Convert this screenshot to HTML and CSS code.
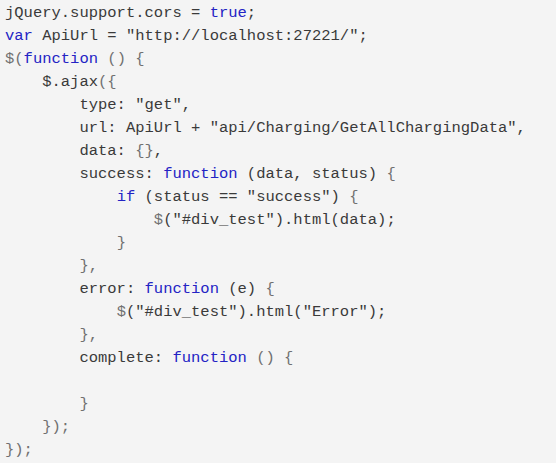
FILE: index.html
```html
<!DOCTYPE html>
<html>
<head>
<meta charset="utf-8">
<link rel="stylesheet" href="styles.css">
</head>
<body>
<pre class="code">jQuery.support.cors = <span class="k">true</span>;
<span class="k">var</span> ApiUrl = "http://localhost:27221/";
<span class="p">$(</span><span class="k">function</span> <span class="p">() {</span>
    $.ajax<span class="p">({</span>
        type: "get",
        url: ApiUrl + "api/Charging/GetAllChargingData",
        data: <span class="p">{}</span>,
        success: <span class="k">function</span> (data, status) <span class="p">{</span>
            <span class="k">if</span> (status == "success") <span class="p">{</span>
                <span class="p">$</span>("#div_test").html(data);
            <span class="p">}</span>
        <span class="p">},</span>
        error: <span class="k">function</span> (e) <span class="p">{</span>
            <span class="p">$</span>("#div_test").html("Error");
        <span class="p">},</span>
        complete: <span class="k">function</span> <span class="p">() {</span>

        <span class="p">}</span>
    <span class="p">});</span>
<span class="p">});</span></pre>
</body>
</html>
```
FILE: styles.css
```css
html, body {
  margin: 0;
  padding: 0;
  background: #f4f4f4;
}
.code {
  margin: 0;
  padding: 2px 0 0 5px;
  font-family: "Liberation Mono", "Courier New", monospace;
  font-size: 15.5px;
  line-height: 23px;
  color: #3a3a3a;
  white-space: pre;
}
.k {
  color: #2323c4;
}
.p {
  color: #707070;
}
```
